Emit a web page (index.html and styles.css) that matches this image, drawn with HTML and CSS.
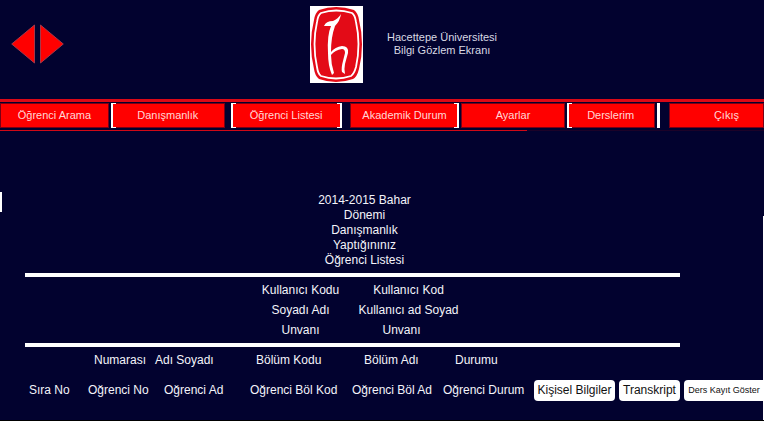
FILE: index.html
```html
<!DOCTYPE html>
<html lang="tr">
<head>
<meta charset="utf-8">
<title>Hacettepe Üniversitesi Bilgi Gözlem Ekranı</title>
<link rel="stylesheet" href="styles.css">
</head>
<body>
<header class="header">
  <div class="history">
    <button class="arrow" aria-label="Geri"><svg viewBox="0 0 24 40"><path d="M23.5 1v38L.7 20z"/></svg></button>
    <button class="arrow" aria-label="İleri"><svg viewBox="0 0 24 40"><path d="M.5 1v38L23.3 20z"/></svg></button>
  </div>
  <svg class="logo" viewBox="0 0 53 77" aria-hidden="true">
    <path fill="#fff" d="M0 0h53v77H0z"/>
    <path fill="#e30b17" d="M9 4Q26-2 44 4Q48 7 49 14Q55 38 49 63Q47 71 43 73Q26 79 9 73Q5 70 4 63Q-2 38 4 14Q5 7 9 4z"/>
    <path fill="none" stroke="#fff" stroke-width="1.8" d="M11 7Q26 2 42 7Q45 9 46 16Q51 38 46 61Q44 68 41 70Q26 75 11 70Q8 68 7 61Q2 38 7 16Q8 9 11 7z"/>
    <path fill="#fff" d="M31 8Q30 15 25 20Q21 31 21 46Q25 41 32 40Q39 40 38 47Q36 54 35 58Q34 62 35 68L32 66Q31 62 33 55L35 47Q35 43 32 43Q25 44 21 49Q21 58 24 67L22 69Q18 60 18 47Q17 29 21 20L14 20Q16 15 23 15Q28 13 31 8z"/>
  </svg>
  <h1 class="title">Hacettepe Üniversitesi<br>Bilgi Gözlem Ekranı</h1>
</header>
<nav class="nav">
  <a class="tab search" href="#">Öğrenci Arama</a>
  <a class="tab advising open" href="#">Danışmanlık</a>
  <a class="tab list open close" href="#">Öğrenci Listesi</a>
  <a class="tab academic close" href="#">Akademik Durum</a>
  <a class="tab settings" href="#">Ayarlar</a>
  <a class="tab lessons open" href="#">Derslerim</a>
  <span class="divider"></span>
  <a class="tab exit" href="#">Çıkış</a>
</nav>
<main class="main">
  <div class="sheet">
    <h2 class="heading">2014-2015 Bahar<br>Dönemi<br>Danışmanlık<br>Yaptığınınız<br>Öğrenci Listesi</h2>
    <hr class="rule">
    <dl class="user">
      <dt>Kullanıcı Kodu</dt><dd>Kullanıcı Kod</dd>
      <dt>Soyadı Adı</dt><dd>Kullanıcı ad Soyad</dd>
      <dt>Unvanı</dt><dd>Unvanı</dd>
    </dl>
    <hr class="rule">
  </div>
  <div class="students-area">
    <table class="students">
      <colgroup><col class="col-row"><col class="col-number"><col class="col-name"><col class="col-code"><col class="col-dept"><col class="col-status"><col></colgroup>
      <thead>
        <tr><th></th><th class="in-small">Numarası</th><th>Adı Soyadı</th><th class="in-small">Bölüm Kodu</th><th class="in-large">Bölüm Adı</th><th class="in-large">Durumu</th><th></th></tr>
      </thead>
      <tbody>
        <tr><td>Sıra No</td><td>Oğrenci No</td><td class="name">Oğrenci Ad</td><td>Oğrenci Böl Kod</td><td>Oğrenci Böl Ad</td><td>Oğrenci Durum</td>
        <td><div class="actions"><button class="info">Kişisel Bilgiler</button><button class="transcript">Transkript</button><button class="courses">Ders Kayıt Göster</button></div></td></tr>
      </tbody>
    </table>
  </div>
</main>
</body>
</html>
```
FILE: styles.css
```css
* { box-sizing: border-box; }
html { background: #fff; }
body {
  margin: 0;
  color: #f4f4fa;
  font-family: "Liberation Sans", Arial, sans-serif;
  font-size: 12px;
}
button { font: inherit; border: 0; padding: 0; }
h1, h2 { margin: 0; font-weight: normal; text-align: center; }

.header { display: flex; height: 99px; padding: 6px 11px 0; background: #02022f; }
.history { display: flex; gap: 5px; padding-top: 18px; width: 299px; }
.arrow { width: 24px; height: 40px; background: none; }
.arrow svg { display: block; width: 24px; height: 40px; fill: #f00; stroke: #a3384a; stroke-width: 1; }
.logo { width: 53px; height: 77px; }
.title { margin: 25px 0 0 24px; font-size: 11px; line-height: 13px; color: #d9d9e4; }

.nav {
  display: flex;
  gap: 2px;
  height: 32px;
  padding: 1px 0 3px;
  border-top: 3px solid #dc0816;
  background: linear-gradient(90deg, #d00816 69%, #1c0228 69%) bottom / 100% 1px no-repeat #02022f;
}
.tab {
  position: relative;
  display: flex;
  align-items: center;
  justify-content: center;
  min-width: 0;
  background: #f00;
  border: 1px solid #7a0015;
  color: #ffd6d6;
  font-size: 11px;
  line-height: 13px;
  text-decoration: none;
  white-space: nowrap;
}
.search { flex: 109 1 0; }
.advising { flex: 114 1 0; margin-right: 4px; }
.list { flex: 111 1 0; margin-right: 6px; }
.academic { flex: 110 1 0; }
.settings { flex: 103 1 0; }
.lessons { flex: 88 1 0; }
.exit { flex: 95 1 0; text-indent: 20px; }
.divider { flex: none; width: 3px; margin-right: 7px; background: #fff; }
.open::before, .close::after {
  content: "";
  position: absolute;
  top: -1px;
  bottom: -1px;
  width: 3px;
  border: 1px solid #fff;
}
.open::before { left: -1px; border-left-width: 2px; border-right: 0; }
.close::after { right: -1px; border-right-width: 2px; border-left: 0; }

.main { position: relative; padding: 62px 0 13px; background: #02022f; border-bottom: 1px solid #000; }
.main::before, .main::after { content: ""; position: absolute; background: #fff; }
.main::before { left: 0; top: 61px; width: 2px; height: 20px; }
.main::after { right: 0; top: 85px; width: 1px; bottom: 0; }
.sheet { margin: 0 84px 0 25px; }
.heading { padding-left: 24px; font-size: 12px; line-height: 15px; }
.rule { height: 4px; margin: 5px 0 3px; border: 0; background: #fff; }
.user + .rule { margin: 3px 0 0; }
.user {
  display: grid;
  grid-template-columns: 92px 102px;
  column-gap: 11px;
  justify-content: center;
  margin: 0;
  padding-left: 9px;
  line-height: 20px;
  text-align: center;
  white-space: nowrap;
}
.user dd { margin: 0; }
.user dd:last-child { padding-right: 14px; }

.students-area { padding-left: 29px; }
.students { width: 100%; table-layout: fixed; border-collapse: collapse; white-space: nowrap; }
.students th, .students td { padding: 0; font-weight: normal; text-align: left; }
.students th { height: 26px; }
.students td { height: 34px; }
.students .in-small { padding-left: 6px; }
.students .in-large { padding-left: 12px; }
.students .name { padding-left: 9px; }
.col-row { width: 59px; }
.col-number { width: 67px; }
.col-name { width: 95px; }
.col-code { width: 102px; }
.col-dept { width: 91px; }
.col-status { width: 91px; }
.actions { display: flex; gap: 4px; }
.actions button { height: 21px; border-radius: 4px; background: #fff; color: #111; white-space: nowrap; }
.info { flex: 0 0 81px; }
.transcript { flex: 0 0 61px; }
.actions .courses { flex: 1 0 80px; border-radius: 4px 0 0 4px; font-size: 9px; }
```
